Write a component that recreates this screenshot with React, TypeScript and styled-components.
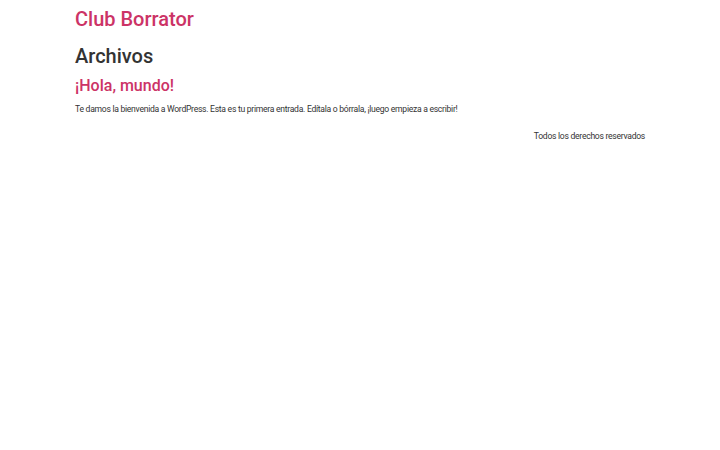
import styled, { createGlobalStyle } from "styled-components";

const GlobalStyle = createGlobalStyle`
  html, body {
    margin: 0;
    padding: 0;
    background: #fff;
  }
  body {
    font-family: Roboto, "Liberation Sans", sans-serif;
    color: #333;
    -webkit-font-smoothing: antialiased;
  }
`;

const Page = styled.div`
  max-width: 570px;
  margin: 0 auto;
`;

const Header = styled.header`
  padding-top: 6.5px;
`;

const SiteTitle = styled.a`
  display: block;
  font-size: 20px;
  line-height: 24px;
  font-weight: 500;
  color: #c36;
  text-decoration: none;
`;

const Main = styled.main`
  margin-top: 13.4px;
`;

const PageTitle = styled.h1`
  margin: 0;
  font-size: 20px;
  line-height: 24px;
  font-weight: 500;
`;

const Post = styled.article`
  margin-top: 8px;
`;

const PostTitle = styled.h2`
  margin: 0;
  font-size: 16px;
  line-height: 19.2px;
  font-weight: 500;

  a {
    color: #c36;
    text-decoration: none;
  }
`;

const SmallText = styled.div`
  font-size: 8.6px;
  line-height: 12px;
  letter-spacing: -0.28px;
`;

const Excerpt = styled(SmallText).attrs({ as: "p" })`
  margin: 8px 0 0;
`;

const Footer = styled(SmallText).attrs({ as: "footer" })`
  margin-top: 15px;
  text-align: right;
`;

export default function App() {
  return (
    <>
      <GlobalStyle />
      <Page>
        <Header>
          <SiteTitle href="#">Club Borrator</SiteTitle>
        </Header>
        <Main>
          <PageTitle>Archivos</PageTitle>
          <Post>
            <PostTitle>
              <a href="#">¡Hola, mundo!</a>
            </PostTitle>
            <Excerpt>
              Te damos la bienvenida a WordPress. Esta es tu primera entrada.
              Edítala o bórrala, ¡luego empieza a escribir!
            </Excerpt>
          </Post>
        </Main>
        <Footer>Todos los derechos reservados</Footer>
      </Page>
    </>
  );
}
